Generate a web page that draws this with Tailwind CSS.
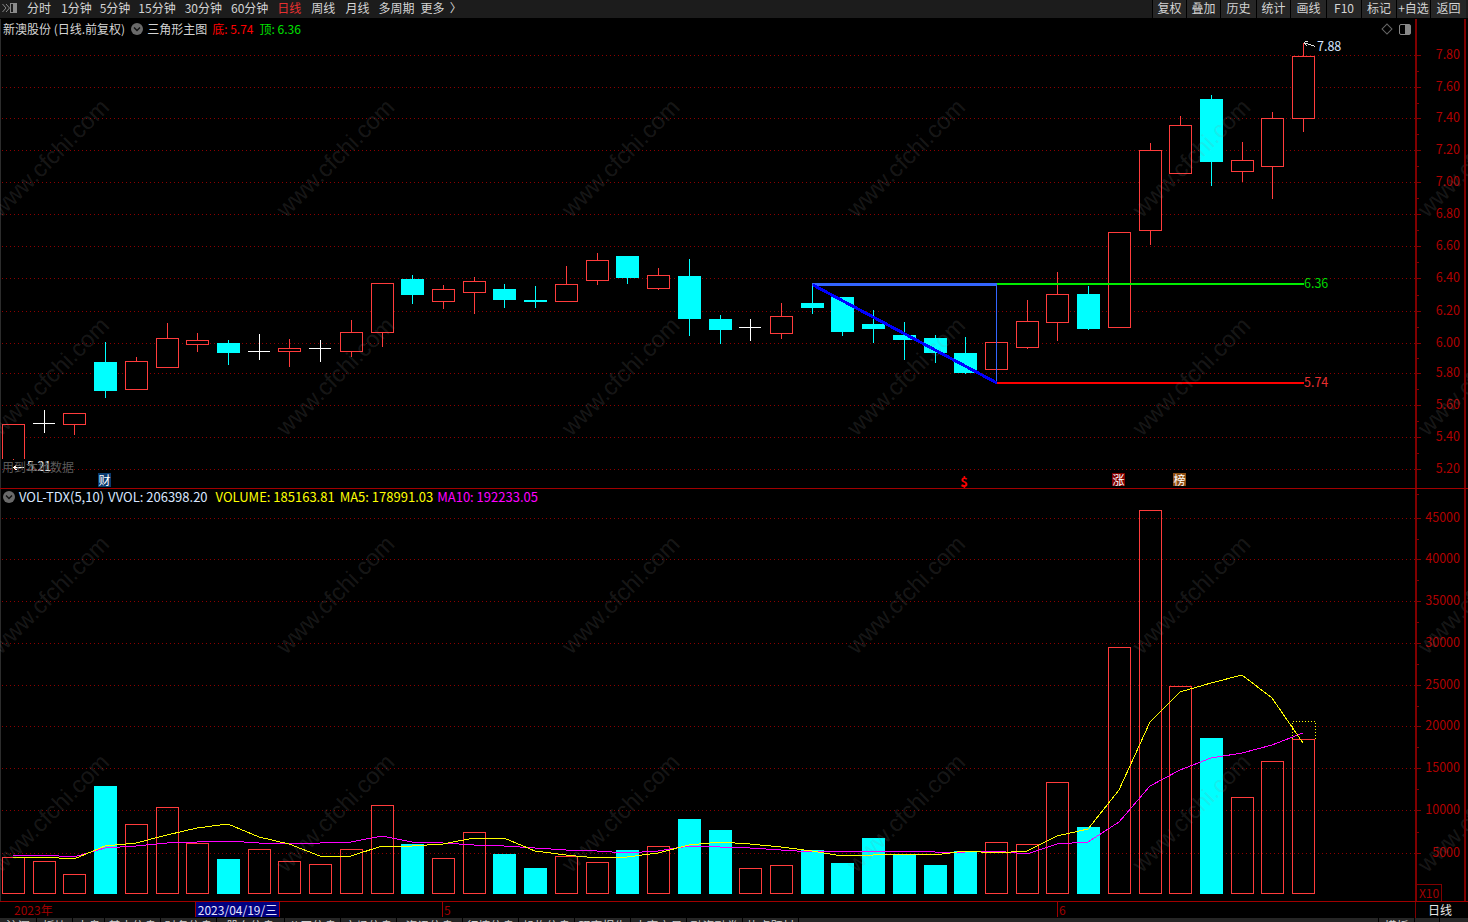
<!DOCTYPE html>
<html lang="zh-CN">
<head>
    <meta charset="UTF-8">
    <title>新澳股份 日线</title>
    <script src="https://cdn.jsdelivr.net/npm/@tailwindcss/browser@4"></script>
</head>
<body class="bg-black">

<div class="relative w-[1468px] h-[922px] overflow-hidden bg-black flex flex-col text-[12px] leading-[16px] text-[#d4d4d4] font-['Noto_Sans_CJK_SC',sans-serif]">

    <!-- chart canvas, filled by the script below -->
    <svg id="chart" class="absolute top-0 left-0" width="1468" height="922" viewBox="0 0 1468 922" shape-rendering="crispEdges"></svg>

    <!-- toolbar -->
    <header class="relative h-[19px] shrink-0 flex items-start bg-[#1c1c1c] border-b border-black">
        <div class="w-[27px] h-[16px] flex items-center pl-[2px]">
            <svg width="15" height="10" viewBox="0 0 15 10" fill="none">
                <path d="M0.5 1 L4 5 L0.5 9 M4 1 L7.5 5 L4 9" stroke="#8a8a8a"/>
                <rect x="8.5" y="0.5" width="6" height="9" stroke="#8a8a8a"/>
                <rect x="11" y="1" width="3" height="8" fill="#8a8a8a"/>
            </svg>
        </div>
        <nav class="flex gap-[8px] h-[16px] items-center">
            <span class="mr-[2px]">分时</span>
            <span>1分钟</span>
            <span>5分钟</span>
            <span>15分钟</span>
            <span class="ml-[1px]">30分钟</span>
            <span class="ml-[1px]">60分钟</span>
            <span class="ml-[1px] text-[#e83030]">日线</span>
            <span class="ml-[2px]">周线</span>
            <span class="ml-[2px]">月线</span>
            <span class="ml-[1px]">多周期</span>
            <span class="-ml-[2px] whitespace-pre">更多  〉</span>
        </nav>
        <div class="ml-auto flex h-[18px] pr-[2px]">
            <span class="w-[34px] bg-[#262626] border-l border-black text-center leading-[15px]">复权</span>
            <span class="w-[34px] bg-[#262626] border-l border-black text-center leading-[15px]">叠加</span>
            <span class="w-[36px] bg-[#262626] border-l border-black text-center leading-[15px]">历史</span>
            <span class="w-[34px] bg-[#262626] border-l border-black text-center leading-[15px]">统计</span>
            <span class="w-[36px] bg-[#262626] border-l border-black text-center leading-[15px]">画线</span>
            <span class="w-[35px] bg-[#262626] border-l border-black text-center leading-[15px]">F10</span>
            <span class="w-[35px] bg-[#262626] border-l border-black text-center leading-[15px]">标记</span>
            <span class="w-[34px] bg-[#262626] border-l border-black text-center leading-[15px] whitespace-nowrap">+自选</span>
            <span class="w-[36px] bg-[#262626] border-l border-black text-center leading-[15px]">返回</span>
        </div>
    </header>

    <!-- price panel -->
    <section class="relative h-[470px] shrink-0 flex pr-[2px] border-b border-[#a00000]">
        <div class="relative flex-1">
            <div class="h-[19px] flex items-center pl-[3px] whitespace-nowrap">
                <span>新澳股份 (日线.前复权)</span>
                <span class="ml-[6px] w-[12px] h-[12px] rounded-full bg-[#6a6a6a] flex items-center justify-center">
                    <svg width="8" height="6" viewBox="0 0 8 6" fill="none"><path d="M1 1.5 L4 4.5 L7 1.5" stroke="#111" stroke-width="1.4"/></svg>
                </span>
                <span class="ml-[4px]">三角形主图</span>
                <span class="ml-[5px] text-[#ff0000]">底: 5.74</span>
                <span class="ml-[6px] text-[#00e000]">顶: 6.36</span>
            </div>
            <div class="absolute top-[6px] right-[24px] w-[8px] h-[8px] rotate-45 border border-[#666]"></div>
            <div class="absolute top-[5px] right-[4px] w-[12px] h-[11px] rounded-[2px] border border-[#888] flex justify-end">
                <div class="w-[5px] bg-[#888]"></div>
            </div>
            <div class="absolute top-[440px] left-[2px] text-[#5a5a5a]">用到本地数据</div>
            <div class="absolute top-[454px] left-[98px] w-[13px] h-[14px] bg-[#0a3a6e] text-white text-center leading-[14px]">财</div>
            <div class="absolute top-[456px] left-[960px] w-[8px] h-[13px] text-[#ff0000] font-bold text-center leading-[13px] text-[13px]">$</div>
            <div class="absolute top-[454px] left-[1112px] w-[13px] h-[13px] bg-[#800000] text-white text-center leading-[13px]">涨</div>
            <div class="absolute top-[454px] left-[1173px] w-[13px] h-[13px] bg-[#8b4d12] text-white text-center leading-[13px]">榜</div>
        </div>
        <aside class="w-[51px] border-l-2 border-r-2 border-[#800000]"></aside>
    </section>

    <!-- volume panel -->
    <section class="relative h-[413px] shrink-0 flex pr-[2px] border-b border-[#a00000]">
        <div class="relative flex-1">
            <div class="h-[16px] flex items-center pl-[3px] whitespace-nowrap text-[13px]">
                <span class="w-[12px] h-[12px] rounded-full bg-[#6a6a6a] flex items-center justify-center">
                    <svg width="8" height="6" viewBox="0 0 8 6" fill="none"><path d="M1 1.5 L4 4.5 L7 1.5" stroke="#111" stroke-width="1.4"/></svg>
                </span>
                <span class="ml-[4px] text-[#d8e6ff]">VOL-TDX(5,10)</span>
                <span class="ml-[4px] text-[#d8e6ff]">VVOL: 206398.20</span>
                <span class="ml-[8px] text-[#ffff00]">VOLUME: 185163.81</span>
                <span class="ml-[5px] text-[#ffff00]">MA5: 178991.03</span>
                <span class="ml-[4px] text-[#ff00ff]">MA10: 192233.05</span>
            </div>
        </div>
        <aside class="relative w-[51px] border-l-2 border-r-2 border-[#800000]">
            <div class="absolute bottom-0 left-0 w-[25px] h-[17px] border-t border-r border-[#800000] text-[#a00000] text-center leading-[15px]">X10</div>
        </aside>
    </section>

    <!-- time axis -->
    <section class="relative h-[16px] shrink-0 flex leading-[15px]">
        <div class="relative flex-1 text-[#a00000]">
            <span class="absolute left-[14px] top-0">2023年</span>
            <span class="absolute left-[195px] top-0 w-[85px] h-[15px] bg-[#000080] border-x border-[#a00000] text-[#e4e4ff] text-center whitespace-nowrap">2023/04/19/三</span>
            <span class="absolute left-[442px] top-0 h-[15px] border-l border-[#a00000] pl-[1px]">5</span>
            <span class="absolute left-[1057px] top-0 h-[15px] border-l border-[#a00000] pl-[1px]">6</span>
        </div>
        <div class="w-[53px] border-l border-[#800000] text-[#e8e8e8] pl-[12px] whitespace-nowrap">日线</div>
    </section>

    <!-- tab strip, only its top edge is inside the window -->
    <footer class="h-[4px] shrink-0 overflow-hidden flex bg-[#262626] text-[#cfcfcf] leading-[16px] whitespace-nowrap">
        <span class="w-[37px] border-r border-black text-center">沪深</span>
        <span class="w-[36px] border-r border-black text-center">板块</span>
        <span class="w-[32px] border-r border-black text-center">大盘</span>
        <span class="w-[56px] border-r border-black text-center">基本信息</span>
        <span class="w-[56px] border-r border-black text-center">财务信息</span>
        <span class="w-[68px] border-r border-black text-center">股东信息</span>
        <span class="w-[56px] border-r border-black text-center">公司信息</span>
        <span class="w-[56px] border-r border-black text-center">市场信息</span>
        <span class="w-[66px] border-r border-black text-center">资讯信息</span>
        <span class="w-[56px] border-r border-black text-center">行情信息</span>
        <span class="w-[56px] border-r border-black text-center">机构信息</span>
        <span class="w-[56px] border-r border-black text-center">研究报告</span>
        <span class="w-[56px] border-r border-black text-center">大宗交易</span>
        <span class="w-[56px] border-r border-black text-center">融资融券</span>
        <span class="w-[56px] border-r border-black text-center">热点题材</span>
        <span class="flex-1"></span>
        <span class="w-[37px] border-x border-black text-center">模板</span>
        <span class="w-[25px] border-r border-black"></span>
        <span class="w-[28px]"></span>
    </footer>
</div>

<script>
    const UP = '#ff3c3c', DOWN = '#00ffff', WHITE = '#ffffff', GRID = '#8c0000', AXIS = '#b00000';

    // [column, wickTop, bodyTop, bodyBottom, wickBottom, kind] u=red hollow, d=cyan, w=white doji, c=cyan doji
    const candles = [
        [13, 424, 424, 459, 459, 'u'], [44, 410, 423, 423, 432, 'w'], [74, 413, 413, 424, 434, 'u'],
        [105, 342, 362, 391, 397, 'd'], [136, 357, 361, 389, 389, 'u'], [167, 323, 338, 367, 367, 'u'],
        [197, 333, 340, 344, 351, 'u'], [228, 340, 343, 353, 364, 'd'], [259, 334, 351, 351, 359, 'w'],
        [289, 339, 348, 351, 366, 'u'], [320, 340, 348, 348, 361, 'w'], [351, 320, 332, 351, 356, 'u'],
        [382, 283, 283, 332, 346, 'u'], [412, 275, 279, 295, 303, 'd'], [443, 285, 289, 301, 308, 'u'],
        [474, 277, 281, 292, 313, 'u'], [504, 284, 289, 300, 307, 'd'], [535, 286, 300, 302, 307, 'c'],
        [566, 266, 284, 301, 301, 'u'], [597, 253, 260, 280, 284, 'u'], [627, 256, 256, 278, 283, 'd'],
        [658, 268, 275, 288, 289, 'u'], [689, 259, 276, 319, 335, 'd'], [720, 315, 319, 330, 343, 'd'],
        [750, 319, 327, 327, 340, 'w'], [781, 303, 316, 333, 338, 'u'], [812, 284, 303, 308, 313, 'd'],
        [842, 297, 297, 332, 335, 'd'], [873, 310, 324, 329, 342, 'd'], [904, 322, 335, 340, 359, 'd'],
        [935, 335, 338, 353, 362, 'd'], [965, 337, 353, 373, 373, 'd'], [996, 342, 342, 369, 369, 'u'],
        [1027, 300, 321, 347, 348, 'u'], [1057, 272, 294, 322, 340, 'u'], [1088, 286, 294, 329, 329, 'd'],
        [1119, 232, 232, 327, 327, 'u'], [1150, 143, 150, 230, 244, 'u'], [1180, 116, 125, 173, 173, 'u'],
        [1211, 95, 99, 162, 185, 'd'], [1242, 142, 160, 171, 181, 'u'], [1272, 112, 118, 166, 198, 'u'],
        [1303, 43, 56, 118, 131, 'u']
    ];

    // volume bar tops, same order as candles; baseline is y=893
    const volumes = [857, 861, 874, 786, 824, 807, 843, 859, 849, 861, 864, 849, 805, 844, 858, 832, 854, 868, 856, 862,
        850, 846, 819, 830, 868, 865, 850, 863, 838, 854, 865, 851, 842, 844, 782, 827, 647, 510, 686, 738, 797, 761, 739];

    const ma5 = [857, 857, 859, 846, 843, 835, 828, 824, 837, 844, 856, 856, 846, 846, 844, 838, 838, 851, 855, 858,
        857, 853, 845, 842, 844, 847, 851, 856, 855, 854, 855, 851, 853, 851, 836, 829, 790, 722, 692, 683, 675, 698, 743];
    const ma10 = [855, 855, 857, 848, 846, 843, 842, 841, 843, 843, 843, 842, 836, 842, 843, 845, 846, 848, 850, 851,
        853, 851, 846, 847, 848, 850, 852, 851, 851, 851, 852, 852, 851, 854, 844, 842, 822, 786, 770, 758, 753, 745, 733];

    const priceTicks = [[55, '7.80'], [87, '7.60'], [118, '7.40'], [150, '7.20'], [182, '7.00'], [214, '6.80'], [246, '6.60'],
        [278, '6.40'], [311, '6.20'], [343, '6.00'], [373, '5.80'], [405, '5.60'], [437, '5.40'], [469, '5.20']];
    const volumeTicks = [[518, '45000'], [559, '40000'], [601, '35000'], [643, '30000'], [685, '25000'], [726, '20000'],
        [768, '15000'], [810, '10000'], [853, '5000']];

    let svg = '';

    const rect = (x, y, w, h, fill) => `<rect x="${x}" y="${y}" width="${w}" height="${h}" fill="${fill}"/>`;
    const box = (x, y, w, h, stroke) => `<rect x="${x + 0.5}" y="${y + 0.5}" width="${w}" height="${h}" fill="none" stroke="${stroke}"/>`;
    const label = (x, y, text, fill, anchor) => `<text x="${x}" y="${y - 2}" fill="${fill}" font-size="12.5" text-anchor="${anchor || 'start'}" dominant-baseline="central" shape-rendering="auto">${text}</text>`;

    svg += rect(0, 19, 1, 883, '#2c2c2c');

    // grid and axis ticks
    [...priceTicks, ...volumeTicks].forEach(([y, text]) => {
        svg += `<line x1="2" x2="1415" y1="${y + 0.5}" y2="${y + 0.5}" stroke="${GRID}" stroke-dasharray="1 3"/>`;
        svg += rect(1417, y, 4, 1, '#800000');
        svg += label(1460, y + 0.5, text, AXIS, 'end');
    });
    [...priceTicks, ...volumeTicks].forEach(([y], i, all) => {
        const next = all[i + 1];
        if (next && next[0] - y < 50) svg += rect(1417, Math.round((y + next[0]) / 2), 2, 1, '#800000');
    });

    // candles
    candles.forEach(([c, top, bodyTop, bodyBottom, bottom, kind]) => {
        const color = kind === 'u' ? UP : kind === 'w' ? WHITE : DOWN;
        svg += rect(c, top, 1, bottom - top + 1, color);
        if (kind === 'u') {
            svg += rect(c - 10, bodyTop + 1, 21, bodyBottom - bodyTop - 1, '#000');
            if (c === 13) {
                svg += rect(c - 11, bodyTop, 1, bodyBottom - bodyTop, color) + rect(c + 11, bodyTop, 1, bodyBottom - bodyTop, color) + rect(c - 11, bodyTop, 23, 1, color);
            } else {
                svg += box(c - 11, bodyTop, 22, bodyBottom - bodyTop, color);
            }
        } else if (kind === 'd' || kind === 'c') {
            svg += rect(c - 11, bodyTop, 23, bodyBottom - bodyTop, color);
        } else {
            svg += rect(c - 11, bodyTop, 22, 1, color);
        }
    });

    // triangle drawing on the price panel
    svg += rect(997, 283, 307, 2, '#00ee00');
    svg += rect(997, 382, 307, 2, '#ff0000');
    svg += rect(812, 283, 185, 3, '#3366ff');
    svg += rect(996, 284, 1, 99, '#3366ff');
    svg += `<line x1="813" y1="285" x2="997" y2="383" stroke="#0000ff" stroke-width="3"/>`;
    svg += label(1304, 284, '6.36', '#00d800');
    svg += label(1304, 383, '5.74', '#e83030');

    // high and low flags
    svg += `<path d="M1315 46.5 L1304 42.5 M1304 42.5 L1308 41 M1304 42.5 L1307 46" stroke="#e0e0e0" fill="none"/>`;
    svg += label(1317, 47.5, '7.88', '#d8e6ff');
    svg += rect(13, 467, 11, 1, '#ffffff');
    svg += `<path d="M13 467.5 L17 465 M13 467.5 L17 470" stroke="#ffffff" fill="none"/>`;
    svg += label(27, 467, '5.21', '#e8e8e8');

    // volume bars
    volumes.forEach((top, i) => {
        const c = candles[i][0];
        if (candles[i][5] === 'u' || candles[i][5] === 'w') {
            svg += box(c - 11, top, 22, 893 - top, UP);
        } else {
            svg += rect(c - 11, top, 23, 894 - top, DOWN);
        }
    });

    // dotted target box above the last bar
    svg += `<path d="M1292.5 739 V721.5 H1315.5 V739" fill="none" stroke="#ffff00" stroke-dasharray="1 2"/>`;

    // moving averages
    const polyline = (values, stroke) => {
        const points = values.map((y, i) => candles[i][0] + ',' + y).join(' ');
        return `<polyline points="${points}" fill="none" stroke="${stroke}" shape-rendering="crispEdges"/>`;
    };
    svg += polyline(ma10, '#ff00ff');
    svg += polyline(ma5, '#ffff00');

    // cfchi watermark, drawn last so it also tints the bodies
    for (let col = 0; col < 6; col++) {
        for (let row = 0; row < 4; row++) {
            const x = 50 + 285.3 * col, y = 158 + 218.3 * row;
            svg += `<text x="${x}" y="${y}" transform="rotate(-45 ${x} ${y})" text-anchor="middle" dominant-baseline="central" font-size="23.5" fill="#8c8c8c" fill-opacity="0.18" font-family="Liberation Sans, sans-serif" shape-rendering="auto">www.cfchi.com</text>`;
        }
    }

    document.getElementById('chart').innerHTML = svg;
</script>

</body>
</html>
